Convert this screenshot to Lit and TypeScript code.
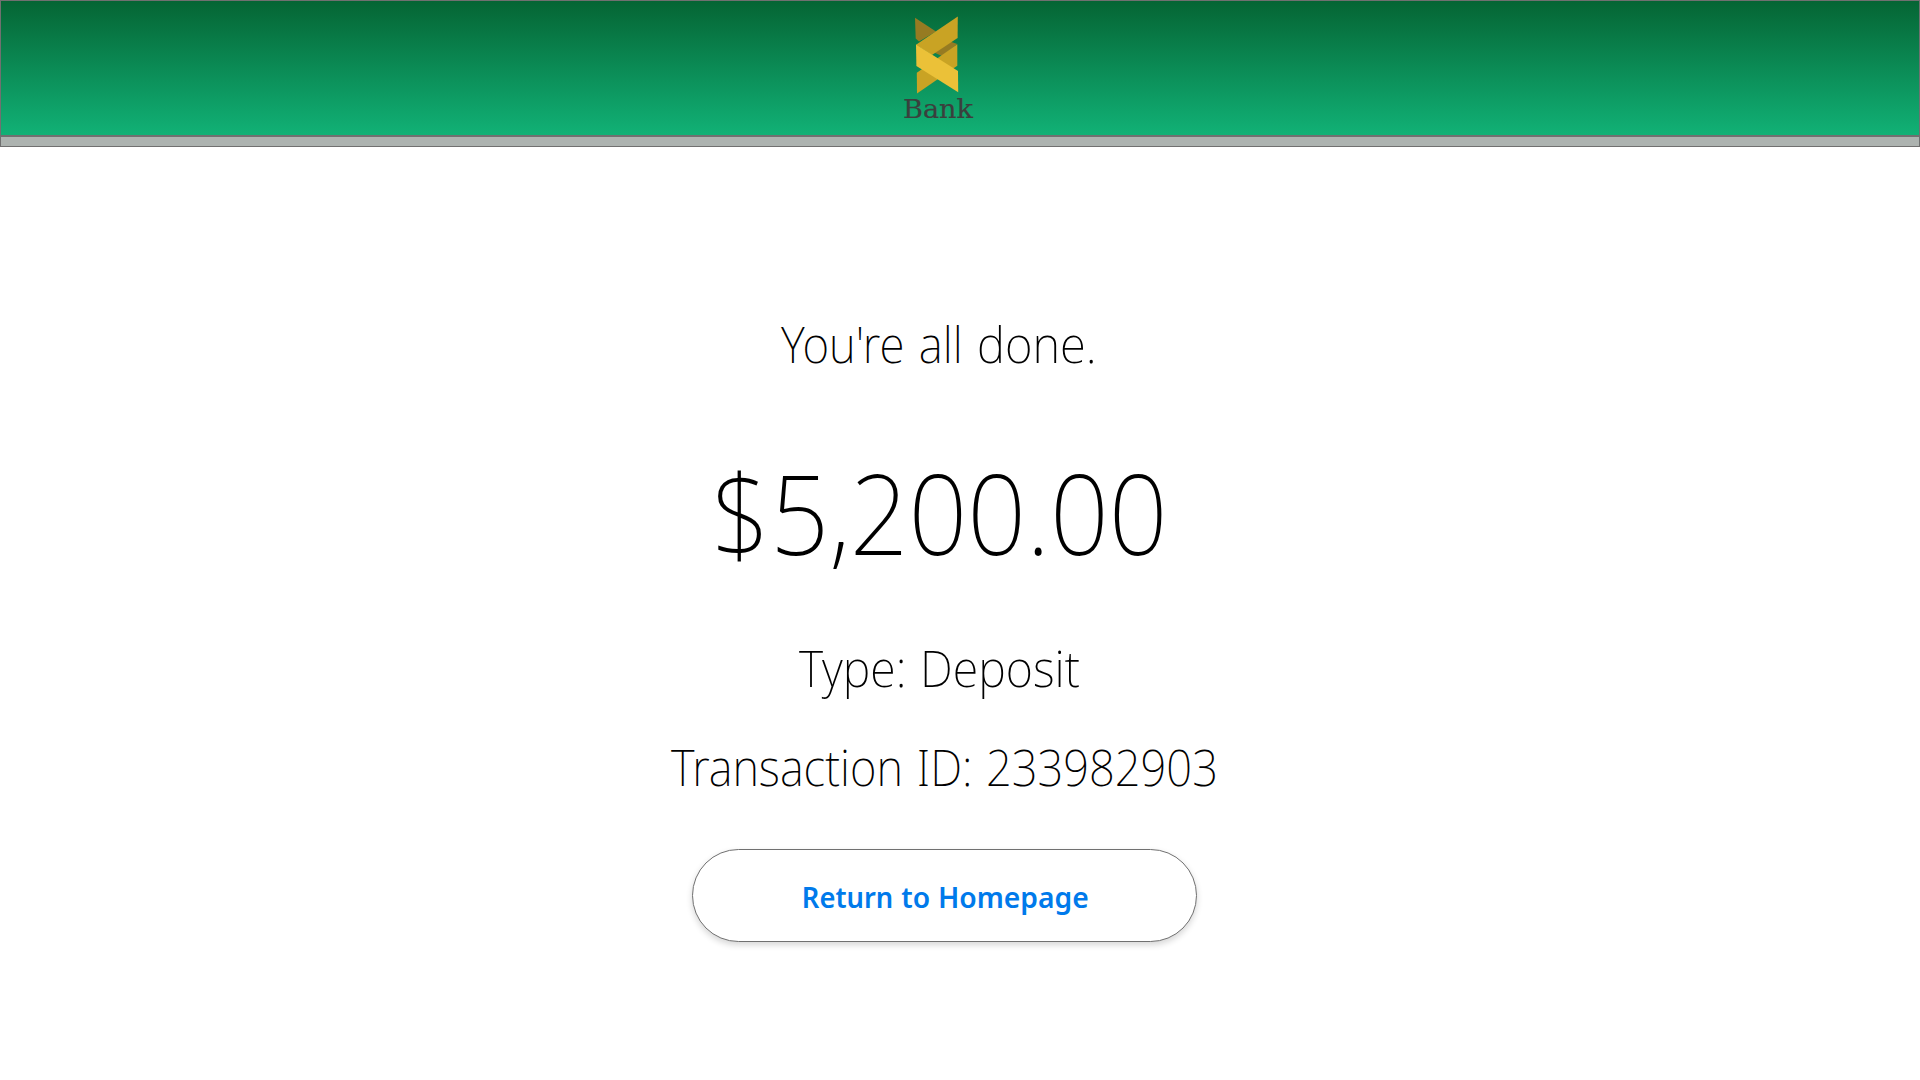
import { LitElement, html, svg, css } from "lit";

/** One word of a line: text, left edge of its ink inside the line, and ink width. */
type Word = [text: string, x: number, width: number];

const pen = document.createElement("canvas").getContext("2d")!;

/** A line of text whose words are condensed to given widths. */
class FitLine extends LitElement {
  static properties = {
    words: { attribute: false },
    size: { type: Number },
    weight: { type: Number },
    cap: { type: Number },
  };
  declare words: Word[];
  declare size: number;
  declare weight: number;
  declare cap: number;

  static styles = css`
    :host { display: block; }
    svg { display: block; overflow: visible; }
    text { font-family: "Noto Sans", "Open Sans", sans-serif; fill: currentColor; }
  `;

  render() {
    const last = this.words[this.words.length - 1];
    const width = last[1] + last[2];
    return html`<svg width=${width} height=${this.cap} role="img" aria-label=${this.words.map((w) => w[0]).join(" ")}>
      ${this.words.map(([text, x, w]) => {
        pen.font = `${this.weight} 1000px "Noto Sans"`;
        const m = pen.measureText(text);
        const k = this.size / 1000;
        const left = -m.actualBoundingBoxLeft * k;
        const ink = (m.actualBoundingBoxRight + m.actualBoundingBoxLeft) * k;
        const s = w / ink;
        return svg`<text font-size=${this.size} font-weight=${this.weight}
          transform="translate(${x - left * s} ${this.cap}) scale(${s} 1)">${text}</text>`;
      })}
    </svg>`;
  }
}
customElements.define("fit-line", FitLine);

class AppRoot extends LitElement {
  static styles = css`
    :host { display: flex; flex-direction: column; width: 1920px; height: 1080px; overflow: hidden; background: #fff; color: #000; }
    * { box-sizing: border-box; }
    header { height: 136px; border: 1px solid #707070; background: linear-gradient(#056534, #11b176); display: flex; padding-left: 902px; }
    .logo { width: 72px; height: 122px; overflow: visible; }
    .logo text { font: 25.5px "DejaVu Serif", serif; fill: #3b3f3d; stroke: #3b3f3d; stroke-width: 0.2px; }
    .strip { height: 11px; border: 1px solid #707070; background: #adb3b0; }
    main { display: flex; flex-direction: column; align-items: flex-start; padding-top: 180px; }
    .done { margin-left: 780.7px; }
    .amount { margin: 113px 0 0 717.9px; }
    .type { margin: 96px 0 0 799.1px; }
    .txn { margin: 63px 0 0 671.2px; }
    button { display: flex; align-items: flex-start; width: 505px; height: 93px; margin: 63px 0 0 692px; padding: 37px 0 0 111px; border: 1px solid #707070; border-radius: 47px; background: #fff; color: #007aeb; box-shadow: 0 3px 6px rgba(0, 0, 0, 0.16); }
  `;

  render() {
    return html`
      <header>
        <svg class="logo" viewBox="903 1 72 122">
          <polygon fill="#967b22" points="915,17.8 936,31.5 919,41.5 915.7,38.5" />
          <polygon fill="#967b22" points="957.3,44 950,41.5 934,52.5 942,56" />
          <polygon fill="#c9a324" points="957.3,44.3 957.3,65.7 917,93.5 916.8,72.8" />
          <polygon fill="#c9a324" points="957.8,16.4 957.6,38 932,55 916,44.7" />
          <polygon fill="#ebc138" points="916,44.4 916.4,66 958.2,92.3 958,71" />
          <text x="903" y="118" textLength="70" lengthAdjust="spacingAndGlyphs">Bank</text>
        </svg>
      </header>
      <div class="strip"></div>
      <main>
        <fit-line class="done" size="50" weight="200" cap="36"
          .words=${[["You're", 0, 121.4], ["all", 140, 38.2], ["done.", 198.2, 114]] as Word[]}></fit-line>
        <fit-line class="amount" size="110.6" weight="200" cap="79"
          .words=${[["$5,200.00", 0, 443.9]] as Word[]}></fit-line>
        <fit-line class="type" size="50" weight="200" cap="36"
          .words=${[["Type:", 0, 104], ["Deposit", 125.5, 154.9]] as Word[]}></fit-line>
        <fit-line class="txn" size="50" weight="200" cap="36"
          .words=${[["Transaction", 0, 228.2], ["ID:", 248, 50.2], ["233982903", 317, 226.8]] as Word[]}></fit-line>
        <button>
          <fit-line size="29.4" weight="600" cap="20.5"
            .words=${[["Return", 0, 87.7], ["to", 97.7, 27.3], ["Homepage", 136.1, 147.6]] as Word[]}></fit-line>
        </button>
      </main>
    `;
  }
}
customElements.define("app-root", AppRoot);
